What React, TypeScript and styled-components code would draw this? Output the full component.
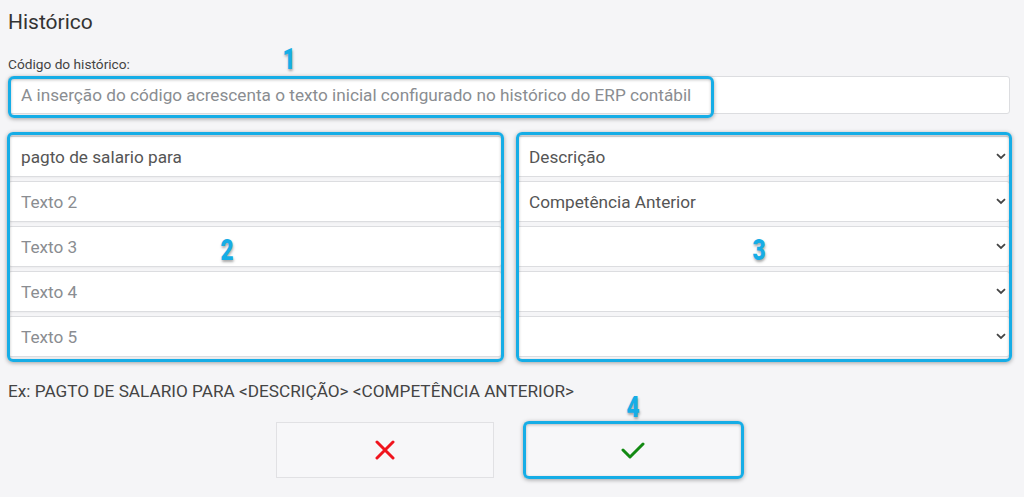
import React from "react";
import styled, { createGlobalStyle } from "styled-components";

const GlobalStyle = createGlobalStyle`
  body {
    margin: 0;
    background: #f5f5f7;
    font-family: Roboto, "Liberation Sans", Arial, sans-serif;
  }
`;

const Page = styled.div`
  width: 1024px;
  height: 497px;
  box-sizing: border-box;
  padding: 8px 14px 0 8px;
  overflow: hidden;
`;

const Title = styled.h2`
  margin: 0;
  font-size: 21px;
  line-height: 28px;
  font-weight: 400;
  color: #333;
`;

const Label = styled.label`
  display: block;
  margin-top: 19px;
  font-size: 13.7px;
  line-height: 18px;
  color: #444;
`;

const fieldBase = `
  box-sizing: border-box;
  width: 100%;
  border: 1px solid #dcdde0;
  border-radius: 3px;
  background: #fff;
  padding: 0 12px;
  font-family: Roboto, "Liberation Sans", Arial, sans-serif;
  font-size: 17.2px;
  color: #555;
  outline: none;
  &::placeholder {
    color: #8a8d91;
  }
`;

// wrapper that carries an annotation frame + number on top of its content
const Annotated = styled.div`
  position: relative;
`;

const CodeField = styled(Annotated)`
  margin-top: 3px;
`;

const CodeInput = styled.input`
  ${fieldBase}
  display: block;
  height: 38px;
`;

const Columns = styled.div`
  display: grid;
  grid-template-columns: 494px 1fr;
  column-gap: 14px;
  margin-top: 22px;
`;

const Column = styled(Annotated)`
  display: flex;
  flex-direction: column;
  gap: 4px;
`;

const TextInput = styled.input`
  ${fieldBase}
  height: 41px;
  box-shadow: 0 1px 2px rgba(0, 0, 0, 0.04);
`;

const SelectWrap = styled.div`
  position: relative;
`;

const Select = styled.select`
  ${fieldBase}
  height: 41px;
  appearance: none;
  -webkit-appearance: none;
`;

const Chevron = styled.svg`
  position: absolute;
  right: 4px;
  top: 17px;
  width: 10px;
  height: 7px;
  pointer-events: none;
`;

const Example = styled.p`
  margin: 23px 0 0;
  font-size: 17.2px;
  line-height: 22px;
  color: #444;
`;

const Actions = styled.div`
  display: flex;
  justify-content: center;
  gap: 30px;
  margin-top: 20px;
`;

const ActionButton = styled.button`
  position: relative;
  width: 218px;
  height: 56px;
  border: 1px solid #e1e1e4;
  background: #f7f7f9;
  display: flex;
  align-items: center;
  justify-content: center;
  padding: 0;
  cursor: pointer;
`;

const Frame = styled.div<{ $inset: string }>`
  position: absolute;
  inset: ${(p) => p.$inset};
  border: 3px solid #16ade6;
  border-radius: 6px;
  box-shadow: 0 1px 4px rgba(0, 0, 0, 0.35), inset 0 1px 3px rgba(0, 0, 0, 0.25);
  pointer-events: none;
`;

const Marker = styled.span<{ $left: string; $top: string }>`
  position: absolute;
  left: ${(p) => p.$left};
  top: ${(p) => p.$top};
  transform: translate(-50%, -50%) scaleX(0.78);
  font-family: Roboto, "DejaVu Sans", sans-serif;
  font-size: 29px;
  font-weight: 900;
  line-height: 1;
  color: #16ade6;
  text-shadow: 1px 2px 3px rgba(0, 0, 0, 0.35);
  pointer-events: none;
`;

const ChevronIcon = () => (
  <Chevron viewBox="0 0 10 7">
    <path d="M1 1.2 L5 5 L9 1.2" fill="none" stroke="#444" strokeWidth="1.8" />
  </Chevron>
);

const texts = [
  { value: "pagto de salario para", placeholder: "Texto 1" },
  { value: "", placeholder: "Texto 2" },
  { value: "", placeholder: "Texto 3" },
  { value: "", placeholder: "Texto 4" },
  { value: "", placeholder: "Texto 5" },
];

const selects = ["Descrição", "Competência Anterior", "", "", ""];

const App: React.FC = () => {
  return (
    <>
      <GlobalStyle />
      <Page>
        <Title>Histórico</Title>
        <Label>Código do histórico:</Label>
        <CodeField>
          <CodeInput placeholder="A inserção do código acrescenta o texto inicial configurado no histórico do ERP contábil" />
          <Frame $inset="0 296px -4px 0" />
          <Marker $left="281px" $top="-17px">1</Marker>
        </CodeField>

        <Columns>
          <Column>
            {texts.map((t, i) => (
              <TextInput key={i} defaultValue={t.value} placeholder={t.placeholder} />
            ))}
            <Frame $inset="-4px -2px -5px -1px" />
            <Marker $left="219px" $top="114px">2</Marker>
          </Column>
          <Column>
            {selects.map((s, i) => (
              <SelectWrap key={i}>
                <Select defaultValue={s}>
                  <option value="">{""}</option>
                  {s && <option value={s}>{s}</option>}
                </Select>
                <ChevronIcon />
              </SelectWrap>
            ))}
            <Frame $inset="-4px -2px -5px 0" />
            <Marker $left="243px" $top="114px">3</Marker>
          </Column>
        </Columns>

        <Example>Ex: PAGTO DE SALARIO PARA &lt;DESCRIÇÃO&gt; &lt;COMPETÊNCIA ANTERIOR&gt;</Example>

        <Actions>
          <ActionButton aria-label="Cancelar">
            <svg width="20" height="20" viewBox="0 0 20 20">
              <path d="M2 2 L18 18 M18 2 L2 18" stroke="#f0141e" strokeWidth="3" strokeLinecap="round" />
            </svg>
          </ActionButton>
          <ActionButton aria-label="Confirmar">
            <svg width="24" height="18" viewBox="0 0 24 18">
              <path d="M2 9 L9 16 L22 3" fill="none" stroke="#138a13" strokeWidth="3" strokeLinecap="round" strokeLinejoin="round" />
            </svg>
            <Frame $inset="-2px -3px -2px -2px" />
            <Marker $left="50%" $top="-16px">4</Marker>
          </ActionButton>
        </Actions>
      </Page>
    </>
  );
};

export default App;
